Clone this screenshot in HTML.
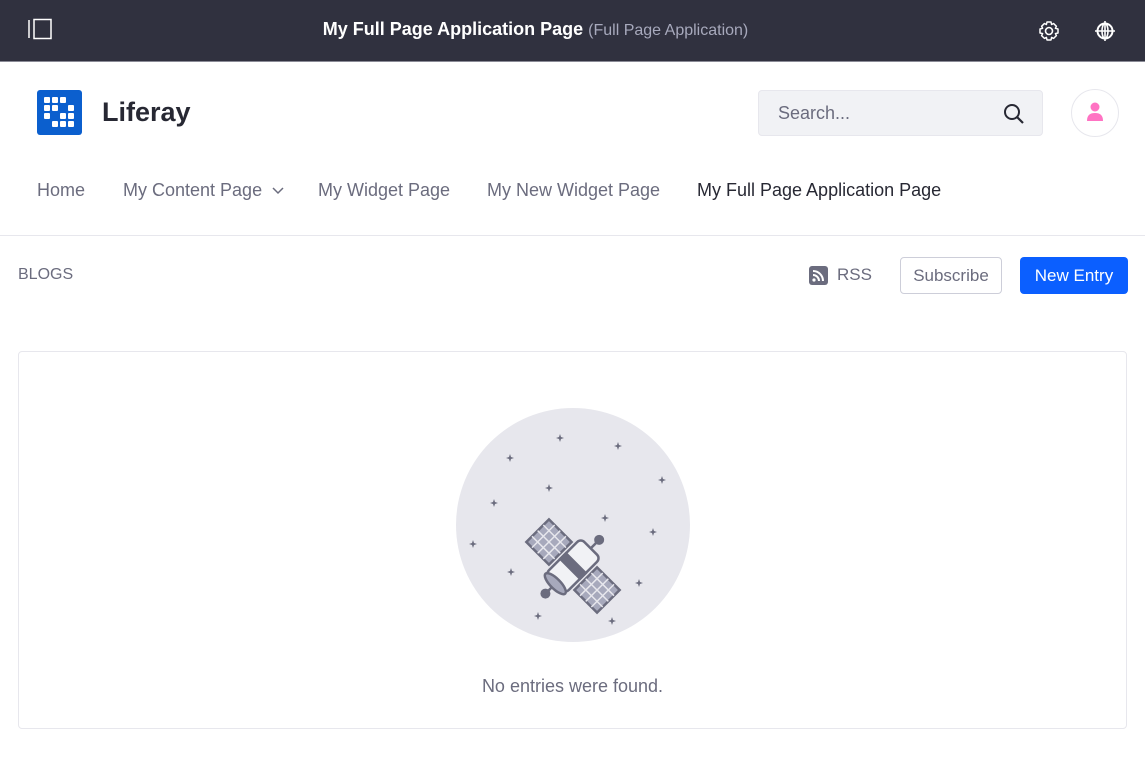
<!DOCTYPE html>
<html><head><style>
body{margin:0;width:1145px;height:766px;background:#fff;font-family:"Liberation Sans",sans-serif;position:relative;overflow:hidden}
.a{position:absolute}
.top{left:0;top:0;width:1145px;height:61px;background:#30313f;border-bottom:1px solid #8a8b96}
.nav{top:180px;font-size:18px;color:#6b6c7e;white-space:nowrap}
</style></head><body>
<div class="a top">
 <svg class="a" style="left:27px;top:18px" width="26" height="22"><line x1="2" y1="2" x2="2" y2="20" stroke="#fff" stroke-width="1.5"/><rect x="7" y="1.5" width="17" height="19" fill="none" stroke="#fff" stroke-width="1.5"/></svg>
 <div class="a" style="left:0;width:1071px;top:19px;text-align:center;color:#fff;font-size:18px"><b>My Full Page Application Page</b> <span style="font-size:16px;color:#a7a9bc">(Full Page Application)</span></div>
 <svg class="a" style="left:1038px;top:20px" width="22" height="22" viewBox="0 0 22 22"><circle cx="11" cy="11" r="3.5" fill="none" stroke="#fff" stroke-width="1.6"/><path d="M9 2h4l.6 2.5 2-1 2.8 2.8-1 2 2.6.7v4l-2.6.6 1 2-2.8 2.8-2-1L13 20H9l-.6-2.6-2 1-2.8-2.8 1-2L2 13V9l2.6-.7-1-2 2.8-2.8 2 1z" fill="none" stroke="#fff" stroke-width="1.5" stroke-linejoin="round"/></svg>
 <svg class="a" style="left:1094px;top:20px" width="22" height="22" viewBox="0 0 22 22"><circle cx="11" cy="11" r="7.5" fill="none" stroke="#fff" stroke-width="2"/><ellipse cx="11" cy="11" rx="3" ry="7.5" fill="none" stroke="#fff" stroke-width="1.6"/><path d="M1 11h20M11 1v20" stroke="#fff" stroke-width="1.6"/></svg>
</div>
<svg class="a" style="left:37px;top:90px" width="45" height="45" viewBox="0 0 45 45"><rect width="45" height="45" rx="3" fill="#0b5fce"/><g fill="#fff"><rect x="7" y="7" width="6" height="6" rx="1"/><rect x="15" y="7" width="6" height="6" rx="1"/><rect x="23" y="7" width="6" height="6" rx="1"/><rect x="7" y="15" width="6" height="6" rx="1"/><rect x="15" y="15" width="6" height="6" rx="1"/><rect x="31" y="15" width="6" height="6" rx="1"/><rect x="7" y="23" width="6" height="6" rx="1"/><rect x="23" y="23" width="6" height="6" rx="1"/><rect x="31" y="23" width="6" height="6" rx="1"/><rect x="15" y="31" width="6" height="6" rx="1"/><rect x="23" y="31" width="6" height="6" rx="1"/><rect x="31" y="31" width="6" height="6" rx="1"/></g></svg>
<div class="a" style="left:102px;top:97px;font-size:27px;font-weight:bold;color:#272833">Liferay</div>
<div class="a" style="left:758px;top:90px;width:283px;height:44px;background:#f1f2f5;border:1px solid #e7e7ed;border-radius:4px"></div>
<div class="a" style="left:778px;top:103px;font-size:18px;color:#6b6c7e">Search...</div>
<svg class="a" style="left:1003px;top:103px" width="22" height="22"><circle cx="9" cy="9" r="7" fill="none" stroke="#272833" stroke-width="2"/><line x1="14" y1="14" x2="20" y2="20" stroke="#272833" stroke-width="2.2"/></svg>
<div class="a" style="left:1071px;top:89px;width:46px;height:46px;border:1px solid #e7e7ed;border-radius:50%"></div>
<svg class="a" style="left:1085px;top:101px" width="20" height="22"><circle cx="10" cy="6" r="4.5" fill="#ff73c3"/><path d="M2 20c0-6 3-8 8-8s8 2 8 8z" fill="#ff73c3"/></svg>
<div class="a nav" style="left:37px">Home</div>
<div class="a nav" style="left:123px">My Content Page <svg width="14" height="10" style="margin-left:4px"><path d="M2 2l5 5 5-5" fill="none" stroke="#6b6c7e" stroke-width="1.5"/></svg></div>
<div class="a nav" style="left:318px">My Widget Page</div>
<div class="a nav" style="left:487px">My New Widget Page</div>
<div class="a nav" style="left:697px;color:#272833">My Full Page Application Page</div>
<div class="a" style="left:0;top:235px;width:1145px;height:1px;background:#e7e7ed"></div>
<div class="a" style="left:18px;top:266px;font-size:16px;color:#6b6c7e">BLOGS</div>
<svg class="a" style="left:809px;top:266px" width="19" height="19"><rect width="19" height="19" rx="3" fill="#6b6c7e"/><path d="M4 5a10 10 0 0 1 10 10M4 9a6 6 0 0 1 6 6" fill="none" stroke="#fff" stroke-width="2"/><circle cx="5" cy="14" r="1.6" fill="#fff"/></svg>
<div class="a" style="left:837px;top:265px;font-size:17px;color:#6b6c7e">RSS</div>
<div class="a" style="left:900px;top:257px;width:100px;height:35px;border:1px solid #cdced9;border-radius:4px;text-align:center;line-height:35px;font-size:17px;color:#6b6c7e">Subscribe</div>
<div class="a" style="left:1020px;top:257px;width:108px;height:37px;background:#0b5fff;border-radius:4px;text-align:center;line-height:37px;font-size:17px;color:#fff">New Entry</div>
<div class="a" style="left:18px;top:351px;width:1107px;height:376px;border:1px solid #e7e7ed;border-radius:4px"></div>
<svg class="a" style="left:456px;top:408px" width="234" height="234" viewBox="0 0 234 234">
<circle cx="117" cy="117" r="117" fill="#e7e7ed"/>
<g fill="#6b6c7e">
<path id="s" d="M0-4L1-1 4 0 1 1 0 4-1 1-4 0-1-1z" transform="translate(104,30)"/>
<use href="#s" x="58" y="8"/><use href="#s" x="-50" y="20"/><use href="#s" x="102" y="42"/><use href="#s" x="-11" y="50"/><use href="#s" x="-66" y="65"/><use href="#s" x="45" y="80"/><use href="#s" x="93" y="94"/><use href="#s" x="-87" y="106"/><use href="#s" x="-49" y="134"/><use href="#s" x="79" y="145"/><use href="#s" x="-22" y="178"/><use href="#s" x="52" y="183"/>
</g>
<g transform="translate(117,158) rotate(45)" stroke="#6b6c7e" stroke-width="2.5">
<rect x="-50" y="-16" width="32" height="32" fill="#a7a9bc"/>
<rect x="18" y="-16" width="32" height="32" fill="#a7a9bc"/>
<path d="M-50-8h32M-50 0h32M-50 8h32M-42-16v32M-34-16v32M-26-16v32M18-8h32M18 0h32M18 8h32M26-16v32M34-16v32M42-16v32" stroke-width="1.5" stroke="#e7e7ed"/>
<rect x="-14" y="-25" width="28" height="50" rx="5" fill="#f1f2f5"/>
<rect x="-14" y="-4" width="28" height="8" fill="#6b6c7e"/>
<ellipse cx="0" cy="25" rx="14" ry="5" fill="#a7a9bc"/>
<line x1="0" y1="-25" x2="0" y2="-34"/>
<line x1="0" y1="30" x2="0" y2="36"/>
<circle cx="0" cy="-37" r="5" fill="#6b6c7e" stroke="none"/>
<circle cx="0" cy="39" r="5" fill="#6b6c7e" stroke="none"/>
</g>
</svg>
<div class="a" style="left:0;width:1145px;top:676px;text-align:center;font-size:18px;color:#6b6c7e">No entries were found.</div>
</body></html>
